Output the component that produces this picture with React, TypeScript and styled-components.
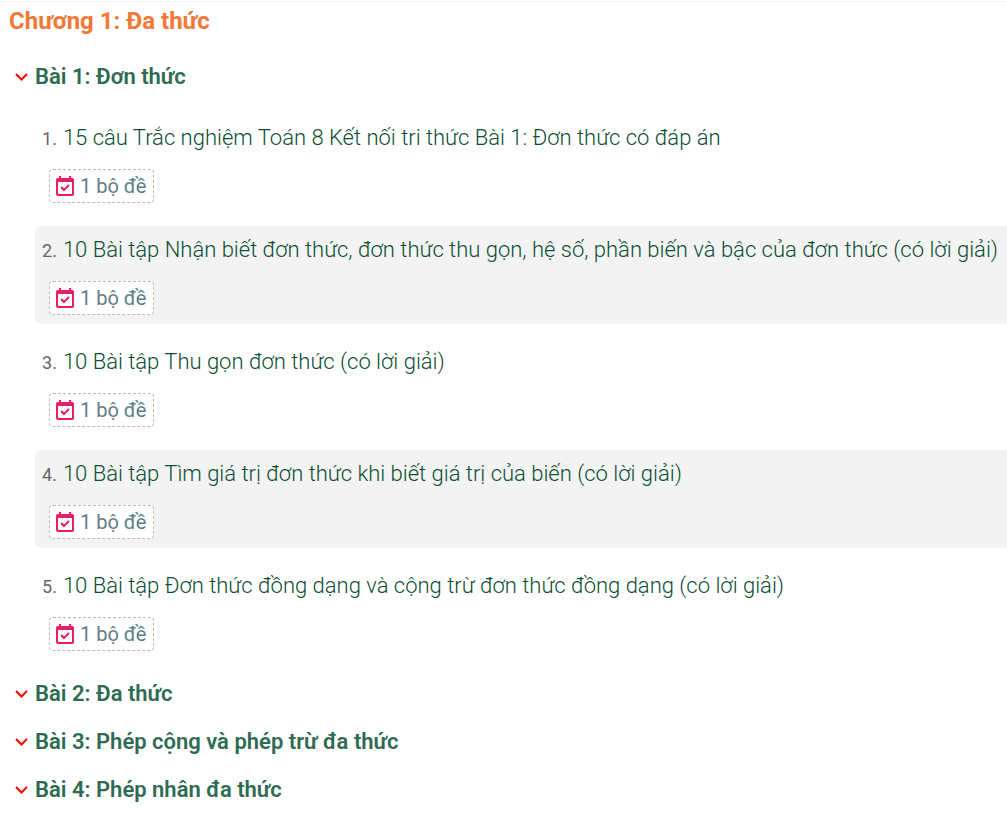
import React from "react";
import styled, { createGlobalStyle } from "styled-components";

const Global = createGlobalStyle`
  * { box-sizing: border-box; }
  body { margin: 0; background: #fff; font-family: Roboto, "Liberation Sans", sans-serif; }
`;
const Page = styled.main`margin-top: 1px; border-top: 1px dotted #eee; padding-top: 4px;`;
const Title = styled.h2`margin: 0 0 27px; padding-left: 9px; font-size: 24px; line-height: 30px; font-weight: 700; color: #f27935;`;
const Lesson = styled.section`margin-bottom: 20px;`;
const Heading = styled.button`
  display: flex; align-items: center; gap: 6px; padding: 0 0 0 15px; border: 0; background: none;
  font-family: inherit; font-size: 22px; line-height: 28px; font-weight: 600; color: #2e6b52; text-align: left; cursor: pointer;
`;
const List = styled.ol`
  display: flex; flex-direction: column; gap: 14px;
  list-style: none; margin: 0; padding: 23px 0 0 35px;
`;
const Item = styled.li<{ $shaded: boolean }>`
  padding: 10px 0 9px 7px;
  border-radius: 6px 0 0 6px; background: ${(p) => (p.$shaded ? "#f3f3f3" : "transparent")};
`;
const Row = styled.div`display: flex; align-items: baseline; gap: 6px; line-height: 28px;`;
const Num = styled.span`font-size: 18px; color: #666;`;
const Link = styled.a`font-size: 22px; font-weight: 300; color: #0c4f34; text-decoration: none;`;
const Badge = styled.a`
  display: flex; align-items: center; gap: 6px; width: fit-content; height: 34px; margin: 16px 0 0 7px; padding: 0 7px 0 6px;
  border: 1px dashed #bbb; border-radius: 4px; background: #fff; font-size: 20px; color: #607d8b; text-decoration: none;
`;

const Chevron = () => (
  <svg width="14" height="14" viewBox="0 0 14 14" fill="none" stroke="#f00" strokeWidth="2" aria-hidden="true">
    <path d="M1 4l5.5 5.5L12 4" />
  </svg>
);
const Calendar = () => (
  <svg width="18" height="20" viewBox="0 0 18 20" fill="none" stroke="#e91e63" strokeWidth="2" aria-hidden="true">
    <rect x="1" y="3" width="16" height="16" rx="1" />
    <path d="M1 4h16" strokeWidth="4" />
    <path d="M4 0v3M14 0v3M5 11l3 3 5-5" />
  </svg>
);

const items = [
  "15 câu Trắc nghiệm Toán 8 Kết nối tri thức Bài 1: Đơn thức có đáp án",
  "10 Bài tập Nhận biết đơn thức, đơn thức thu gọn, hệ số, phần biến và bậc của đơn thức (có lời giải)",
  "10 Bài tập Thu gọn đơn thức (có lời giải)",
  "10 Bài tập Tìm giá trị đơn thức khi biết giá trị của biến (có lời giải)",
  "10 Bài tập Đơn thức đồng dạng và cộng trừ đơn thức đồng dạng (có lời giải)",
];
const others = ["Bài 2: Đa thức", "Bài 3: Phép cộng và phép trừ đa thức", "Bài 4: Phép nhân đa thức"];

export default function App() {
  return (
    <Page>
      <Global />
      <Title>Chương 1: Đa thức</Title>
      <Lesson>
        <Heading type="button" aria-expanded="true"><Chevron />Bài 1: Đơn thức</Heading>
        <List>
          {items.map((t, i) => (
            <Item key={t} $shaded={i % 2 === 1}>
              <Row><Num>{i + 1}.</Num><Link href="#">{t}</Link></Row>
              <Badge href="#"><Calendar />1 bộ đề</Badge>
            </Item>
          ))}
        </List>
      </Lesson>
      {others.map((t) => (
        <Lesson key={t}><Heading type="button" aria-expanded="false"><Chevron />{t}</Heading></Lesson>
      ))}
    </Page>
  );
}
